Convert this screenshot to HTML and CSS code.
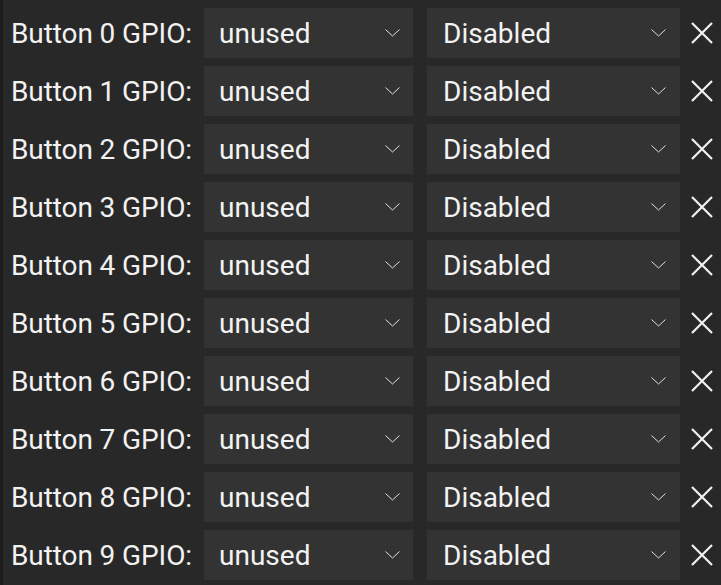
FILE: index.html
```html
<!DOCTYPE html>
<html>
<head>
<meta charset="utf-8">
<link rel="stylesheet" href="styles.css">
</head>
<body>
<div class="panel">
  <div class="row"><span class="label">Button 0 GPIO:</span><div class="sel sel-a"><span>unused</span><svg class="chev" viewBox="0 0 15 8"><path d="M0.5 0.5 L7.5 7 L14.5 0.5"/></svg></div><div class="sel sel-b"><span>Disabled</span><svg class="chev" viewBox="0 0 15 8"><path d="M0.5 0.5 L7.5 7 L14.5 0.5"/></svg></div><svg class="x" viewBox="0 0 22 22"><path d="M1 1 L21 21 M21 1 L1 21"/></svg></div>
  <div class="row"><span class="label">Button 1 GPIO:</span><div class="sel sel-a"><span>unused</span><svg class="chev" viewBox="0 0 15 8"><path d="M0.5 0.5 L7.5 7 L14.5 0.5"/></svg></div><div class="sel sel-b"><span>Disabled</span><svg class="chev" viewBox="0 0 15 8"><path d="M0.5 0.5 L7.5 7 L14.5 0.5"/></svg></div><svg class="x" viewBox="0 0 22 22"><path d="M1 1 L21 21 M21 1 L1 21"/></svg></div>
  <div class="row"><span class="label">Button 2 GPIO:</span><div class="sel sel-a"><span>unused</span><svg class="chev" viewBox="0 0 15 8"><path d="M0.5 0.5 L7.5 7 L14.5 0.5"/></svg></div><div class="sel sel-b"><span>Disabled</span><svg class="chev" viewBox="0 0 15 8"><path d="M0.5 0.5 L7.5 7 L14.5 0.5"/></svg></div><svg class="x" viewBox="0 0 22 22"><path d="M1 1 L21 21 M21 1 L1 21"/></svg></div>
  <div class="row"><span class="label">Button 3 GPIO:</span><div class="sel sel-a"><span>unused</span><svg class="chev" viewBox="0 0 15 8"><path d="M0.5 0.5 L7.5 7 L14.5 0.5"/></svg></div><div class="sel sel-b"><span>Disabled</span><svg class="chev" viewBox="0 0 15 8"><path d="M0.5 0.5 L7.5 7 L14.5 0.5"/></svg></div><svg class="x" viewBox="0 0 22 22"><path d="M1 1 L21 21 M21 1 L1 21"/></svg></div>
  <div class="row"><span class="label">Button 4 GPIO:</span><div class="sel sel-a"><span>unused</span><svg class="chev" viewBox="0 0 15 8"><path d="M0.5 0.5 L7.5 7 L14.5 0.5"/></svg></div><div class="sel sel-b"><span>Disabled</span><svg class="chev" viewBox="0 0 15 8"><path d="M0.5 0.5 L7.5 7 L14.5 0.5"/></svg></div><svg class="x" viewBox="0 0 22 22"><path d="M1 1 L21 21 M21 1 L1 21"/></svg></div>
  <div class="row"><span class="label">Button 5 GPIO:</span><div class="sel sel-a"><span>unused</span><svg class="chev" viewBox="0 0 15 8"><path d="M0.5 0.5 L7.5 7 L14.5 0.5"/></svg></div><div class="sel sel-b"><span>Disabled</span><svg class="chev" viewBox="0 0 15 8"><path d="M0.5 0.5 L7.5 7 L14.5 0.5"/></svg></div><svg class="x" viewBox="0 0 22 22"><path d="M1 1 L21 21 M21 1 L1 21"/></svg></div>
  <div class="row"><span class="label">Button 6 GPIO:</span><div class="sel sel-a"><span>unused</span><svg class="chev" viewBox="0 0 15 8"><path d="M0.5 0.5 L7.5 7 L14.5 0.5"/></svg></div><div class="sel sel-b"><span>Disabled</span><svg class="chev" viewBox="0 0 15 8"><path d="M0.5 0.5 L7.5 7 L14.5 0.5"/></svg></div><svg class="x" viewBox="0 0 22 22"><path d="M1 1 L21 21 M21 1 L1 21"/></svg></div>
  <div class="row"><span class="label">Button 7 GPIO:</span><div class="sel sel-a"><span>unused</span><svg class="chev" viewBox="0 0 15 8"><path d="M0.5 0.5 L7.5 7 L14.5 0.5"/></svg></div><div class="sel sel-b"><span>Disabled</span><svg class="chev" viewBox="0 0 15 8"><path d="M0.5 0.5 L7.5 7 L14.5 0.5"/></svg></div><svg class="x" viewBox="0 0 22 22"><path d="M1 1 L21 21 M21 1 L1 21"/></svg></div>
  <div class="row"><span class="label">Button 8 GPIO:</span><div class="sel sel-a"><span>unused</span><svg class="chev" viewBox="0 0 15 8"><path d="M0.5 0.5 L7.5 7 L14.5 0.5"/></svg></div><div class="sel sel-b"><span>Disabled</span><svg class="chev" viewBox="0 0 15 8"><path d="M0.5 0.5 L7.5 7 L14.5 0.5"/></svg></div><svg class="x" viewBox="0 0 22 22"><path d="M1 1 L21 21 M21 1 L1 21"/></svg></div>
  <div class="row"><span class="label">Button 9 GPIO:</span><div class="sel sel-a"><span>unused</span><svg class="chev" viewBox="0 0 15 8"><path d="M0.5 0.5 L7.5 7 L14.5 0.5"/></svg></div><div class="sel sel-b"><span>Disabled</span><svg class="chev" viewBox="0 0 15 8"><path d="M0.5 0.5 L7.5 7 L14.5 0.5"/></svg></div><svg class="x" viewBox="0 0 22 22"><path d="M1 1 L21 21 M21 1 L1 21"/></svg></div>
</div>
</body>
</html>
```

FILE: styles.css
```css
html, body {
  margin: 0;
  padding: 0;
  height: 100%;
  background: #282828;
}
body {
  border-left: 3px solid #1c1c1c;
  box-sizing: border-box;
  font-family: Roboto, "Noto Sans", sans-serif;
  color: #f2f2f2;
  overflow: hidden;
}
.panel {
  display: flex;
  flex-direction: column;
  gap: 8px;
  padding: 8px 0 0 8px;
}
.row {
  display: flex;
  align-items: center;
  height: 50px;
}
.label {
  font-size: 28px;
  width: 193px;
  white-space: nowrap;
  letter-spacing: -0.1px;
}
.sel {
  height: 50px;
  background: #333333;
  display: flex;
  align-items: center;
  justify-content: space-between;
  box-sizing: border-box;
  font-size: 28px;
}
.sel-a {
  width: 209px;
  padding: 0 13px 0 15px;
}
.sel-b {
  width: 253px;
  margin-left: 14px;
  padding: 0 14px 0 16px;
}
.chev {
  width: 15px;
  height: 8px;
  fill: none;
  stroke: #e0e0e0;
  stroke-width: 1;
}
.x {
  width: 22px;
  height: 22px;
  margin-left: 11px;
  fill: none;
  stroke: #f2f2f2;
  stroke-width: 2.2;
}
```
